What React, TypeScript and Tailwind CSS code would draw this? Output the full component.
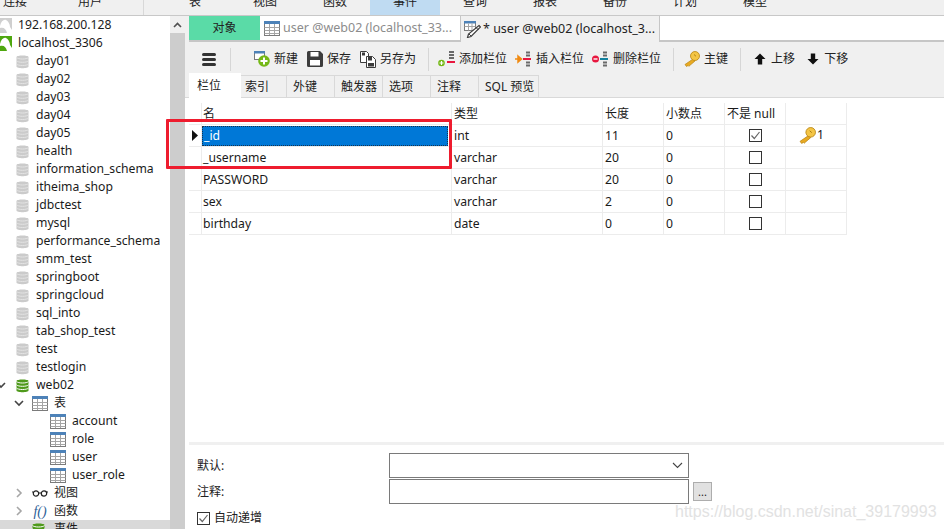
import React from "react";

const F = "font-['Noto_Sans','Noto_Sans_CJK_SC',sans-serif]";

function Db({ green = false }: { green?: boolean }) {
  const c = green ? "#4f9a1c" : "#cbcbcb";
  const d = green ? "#8fc765" : "#e4e4e4";
  return (
    <svg width="13" height="15" viewBox="0 0 13 15" className="shrink-0">
      <path d="M0.500 3C0.500 1 12.500 1 12.500 3V12.500C12.500 14.800 0.500 14.800 0.500 12.500z" fill={c} />
      <path d="M0.500 3.500C2 5.500 11 5.500 12.500 3.500M0.500 6.800C2 8.800 11 8.800 12.500 6.800M0.500 10C2 12 11 12 12.500 10" fill="none" stroke={green ? "#fff" : d} strokeWidth="1" />
    </svg>
  );
}

function Server({ green = false }: { green?: boolean }) {
  return (
    <svg width="12" height="15" viewBox="0 0 12 15" className="shrink-0">
      <rect width="12" height="15" fill={green ? "#4ea70f" : "#cfcfcf"} />
      <path d="M0 8C1 3 4 1 6 2c2 1 4 4 4 7l2 3v3H7C6 11 4 9 0 10z" fill="#fff" />
    </svg>
  );
}

function TableIcon() {
  return (
    <svg width="16" height="15" viewBox="0 0 16 15" className="shrink-0">
      <rect x="0.500" y="0.500" width="15" height="14" fill="#fff" stroke="#7b7b7b" />
      <rect x="0" y="0" width="16" height="3" fill="#4d82b8" />
      <path d="M0.500 6.500h15M0.500 9.500h15M0.500 12.500h15M5.500 3v11M10.500 3v11" stroke="#a5a5a5" fill="none" />
    </svg>
  );
}

function EditTableIcon() {
  return (
    <svg width="17" height="17" viewBox="0 0 17 17" className="shrink-0">
      <rect x="0.500" y="0.500" width="11" height="9" fill="#fff" stroke="#7b7b7b" />
      <rect x="0" y="0" width="12" height="2.500" fill="#4d82b8" />
      <path d="M0.500 5.500h11M4.500 2.500v7M8 2.500v7" stroke="#a5a5a5" fill="none" />
      <path d="M15 4.500l1.500 1.500L7 15.500 3.500 16.500 4.500 13z" fill="#fff" stroke="#3c3c3c" strokeWidth="1.200" />
      <path d="M12.500 7l2 2M5 13l2 2" stroke="#3c3c3c" />
    </svg>
  );
}

function Chevron({ open = false, dark = false }: { open?: boolean; dark?: boolean }) {
  return (
    <svg width="10" height="10" viewBox="0 0 10 10" className="shrink-0">
      <path
        d={open ? "M1 3l4 4 4-4" : "M3 1l4 4-4 4"}
        fill="none"
        stroke={dark ? "#444" : "#a6a6a6"}
        strokeWidth="1.600"
      />
    </svg>
  );
}

function Key({ size = 16 }: { size?: number }) {
  return (
    <svg width={size} height={size} viewBox="0 0 16 16" className="shrink-0">
      <path d="M9 8L1 13.500l1.500 2 1.500-1 .8.800L11 10z" fill="#e8aa22" stroke="#b98412" strokeWidth="0.700" />
      <circle cx="11" cy="5" r="4.500" fill="#f4c545" stroke="#b98412" strokeWidth="0.800" />
      <path d="M10 3.500l2 1.800" stroke="#a97a10" strokeWidth="0.900" />
    </svg>
  );
}

function Check({ on = false }: { on?: boolean }) {
  return (
    <span className="flex h-[13px] w-[13px] shrink-0 items-center justify-center border border-[#333333] bg-white">
      {on && (
        <svg width="11" height="11" viewBox="0 0 11 11">
          <path d="M1.500 5.500l2.800 3 5.200-6.500" fill="none" stroke="#666" strokeWidth="1.200" />
        </svg>
      )}
    </span>
  );
}

const NewIcon = () => (
  <svg width="16" height="16" viewBox="0 0 16 16" className="shrink-0">
    <rect x="0.500" y="0.500" width="10" height="8" fill="#fff" stroke="#7b7b7b" />
    <rect width="11" height="2.500" fill="#4d82b8" />
    <circle cx="10" cy="10" r="5.800" fill="#74b816" />
    <path d="M6.500 10h7M10 6.500v7" stroke="#fff" strokeWidth="2" />
  </svg>
);
const SaveIcon = () => (
  <svg width="16" height="16" viewBox="0 0 16 16" className="shrink-0">
    <path d="M0 1.500A1.500 1.500 0 0 1 1.500 0H13l3 3v11.500a1.500 1.500 0 0 1-1.500 1.500h-13A1.500 1.500 0 0 1 0 14.500z" fill="#3c3c3c" />
    <rect x="3.500" y="1" width="8" height="4.500" fill="#fff" />
    <rect x="3" y="9" width="10" height="5.500" fill="#fff" />
  </svg>
);
const SaveAsIcon = () => (
  <svg width="16" height="17" viewBox="0 0 16 17" className="shrink-0">
    <path d="M0.500 0.500h6l2 2v9h-8z" fill="#fff" stroke="#3c3c3c" />
    <rect x="2" y="1.500" width="3" height="3" fill="#3c3c3c" />
    <path d="M6.500 5.500h6l3 3v8h-9z" fill="#fff" stroke="#3c3c3c" />
    <rect x="8" y="6" width="4" height="3.500" fill="#3c3c3c" />
    <rect x="8" y="12" width="6" height="3.500" fill="#3c3c3c" />
  </svg>
);
function ColIcon({ kind }: { kind: "add" | "ins" | "del" }) {
  if (kind === "add") {
    return (
      <svg width="17" height="16" viewBox="0 0 17 16" className="shrink-0">
        <path d="M11 1h5M11 4h5M11 7h5" stroke="#6a6a6a" strokeWidth="1.800" />
        <path d="M9 11h8" stroke="#e8173f" strokeWidth="2" />
        <circle cx="3.500" cy="12" r="3.300" fill="#74b816" />
        <path d="M1.500 12h4M3.500 10v4" stroke="#fff" strokeWidth="1.200" />
      </svg>
    );
  }
  return (
    <svg width="16" height="16" viewBox="0 0 16 16" className="shrink-0">
      <path d="M11 1.500h4M11 4.500h4M11 11.500h4M11 14.500h4" stroke="#6a6a6a" strokeWidth="1.800" />
      <path d="M8 8h8" stroke={kind === "ins" ? "#e8173f" : "#13809d"} strokeWidth="2" />
      {kind === "ins" ? (
        <path d="M0 8h4M3 5l3.500 3-3.500 3z" fill="#f08a12" stroke="#f08a12" strokeWidth="1.500" />
      ) : (
        <>
          <circle cx="3.500" cy="8" r="3.500" fill="#e8173f" />
          <path d="M1.500 8h4" stroke="#fff" strokeWidth="1.400" />
        </>
      )}
    </svg>
  );
}
const Arrow = ({ up }: { up: boolean }) => (
  <svg width="12" height="12" viewBox="0 0 12 12" className="shrink-0">
    <path
      d={up ? "M6 0.500L11.500 6H8.200v5.500H3.800V6H0.500z" : "M6 11.500L0.500 6h3.300V0.500h4.400V6h3.300z"}
      fill="#111"
    />
  </svg>
);

const Sep = ({ className }: { className: string }) => <div className={`h-[23px] w-px shrink-0 bg-[#d6d6d6] ${className}`} />;

function Tool({ icon, label, className }: { icon: React.ReactNode; label: string; className?: string }) {
  return (
    <div className={`flex items-center ${className ?? ""}`}>
      {icon}
      <span className="whitespace-nowrap text-[12px] text-[#222222]">{label}</span>
    </div>
  );
}

const dbs = [
  "day01","day02","day03","day04","day05","health","information_schema","itheima_shop","jdbctest","mysql",
  "performance_schema","smm_test","springboot","springcloud","sql_into","tab_shop_test","test","testlogin",
];

function TreeRow({ children, className }: { children: React.ReactNode; className?: string }) {
  return <div className={`flex h-[18px] shrink-0 items-center whitespace-nowrap ${className ?? ""}`}>{children}</div>;
}

const cols = "grid grid-cols-[13px_250px_151px_61px_61px_61px_61px]";
const cell = "flex items-center border-r border-b border-[#ececec] px-[2px] text-[12.200px] text-[#1a1a1a]";

const rows = [
  { name: "_id", type: "int", len: "11", dec: "0", nn: true, pk: true },
  { name: "_username", type: "varchar", len: "20", dec: "0" },
  { name: "PASSWORD", type: "varchar", len: "20", dec: "0" },
  { name: "sex", type: "varchar", len: "2", dec: "0" },
  { name: "birthday", type: "date", len: "0", dec: "0" },
];

export default function App() {
  return (
    <div className={`relative flex h-[529px] w-[944px] flex-col overflow-hidden bg-white ${F}`}>
      {/* menu strip, clipped at the top */}
      <div className="flex h-[16px] shrink-0 overflow-hidden border-b border-[#c8c8c8] bg-[#f0f0f0] text-[12px] text-[#222222]">
        <div className="flex w-[144px] shrink-0 border-r border-[#d8d8d8] pl-[3px]">
          <span className="-mt-[7px] w-[75px]">连接</span>
          <span className="-mt-[7px]">用户</span>
        </div>
        <div className="flex pl-[16px]">
          {["表","视图","函数","事件","查询","报表","备份","计划","模型"].map((m) => (
            <div
              key={m}
              className={`flex h-[15px] w-[70px] justify-center ${m === "事件" ? "bg-[#bfdbf2]" : ""}`}
            >
              <span className="-mt-[7px]">{m}</span>
            </div>
          ))}
        </div>
      </div>

      <div className="flex min-h-0 flex-1">
        {/* sidebar */}
        <div className="flex w-[170px] shrink-0 flex-col overflow-hidden text-[12.200px] text-[#1a1a1a]">
          <TreeRow className="gap-[6px]"><Server /><span>192.168.200.128</span></TreeRow>
          <TreeRow className="gap-[6px]"><Server green /><span>localhost_3306</span></TreeRow>
          {dbs.map((d) => (
            <TreeRow key={d} className="gap-[7px] pl-[16px]"><Db /><span>{d}</span></TreeRow>
          ))}
          <TreeRow>
            <span className="-ml-[4px] mr-[10px] flex"><Chevron open dark /></span>
            <Db green />
            <span className="ml-[7px]">web02</span>
          </TreeRow>
          <TreeRow className="pl-[14px]">
            <Chevron open dark />
            <span className="ml-[8px]"><TableIcon /></span>
            <span className="ml-[6px] text-[12px]">表</span>
          </TreeRow>
          {["account","role","user","user_role"].map((t) => (
            <TreeRow key={t} className="gap-[6px] pl-[50px]"><TableIcon /><span>{t}</span></TreeRow>
          ))}
          <TreeRow className="pl-[14px]">
            <Chevron />
            <span className="ml-[8px]">
              <svg width="16" height="8" viewBox="0 0 16 8" className="block">
                <circle cx="4" cy="4.500" r="2.700" fill="none" stroke="#222" strokeWidth="1.200" />
                <circle cx="12" cy="4.500" r="2.700" fill="none" stroke="#222" strokeWidth="1.200" />
                <path d="M6.500 4h3M0 3l1.500 0M14.500 3l1.500 0" stroke="#222" />
              </svg>
            </span>
            <span className="ml-[6px] text-[12px]">视图</span>
          </TreeRow>
          <TreeRow className="pl-[14px]">
            <Chevron />
            <span className="ml-[8px] w-[16px] text-center font-['Liberation_Serif',serif] text-[14px] italic text-[#2c5e96]">f()</span>
            <span className="ml-[6px] text-[12px]">函数</span>
          </TreeRow>
          <TreeRow className="bg-[#d9d9d9] pl-[32px] text-[12px]">
            <Db green />
            <span className="ml-[9px]">事件</span>
          </TreeRow>
        </div>

        {/* scroll bar */}
        <div className="flex w-[15px] shrink-0 flex-col bg-[#cdcdcd]">
          <div className="flex h-[17px] items-center justify-center bg-[#f0f0f0]">
            <svg width="9" height="6" viewBox="0 0 9 6"><path d="M1 5l3.500-3.500L8 5" fill="none" stroke="#505050" strokeWidth="1.600" /></svg>
          </div>
        </div>

        {/* main */}
        <div className="flex min-w-0 flex-1 flex-col">
          {/* document tabs */}
          <div className="h-[26px] shrink-0 bg-[#f0f0f0] pl-[4px]">
            <div className="flex h-[26px] border-b-2 border-[#c6c6c6] bg-white text-[12.500px]">
              <div className="flex w-[71px] items-center justify-center bg-[#5adba7] text-[12px] text-[#222222]">对象</div>
              <div className="flex w-[200px] items-center gap-[3px] pl-[4px] text-[#8c8c8c]">
                <TableIcon />
                <span className="whitespace-nowrap">user @web02 (localhost_33...</span>
              </div>
              <div className="-mb-[2px] flex w-[200px] items-center gap-[2px] border-x border-[#c6c6c6] bg-[#f0f0f0] pl-[3px] text-[#222222]">
                <EditTableIcon />
                <span className="whitespace-nowrap">* user @web02 (localhost_3...</span>
              </div>
            </div>
          </div>

          {/* toolbar */}
          <div className="flex h-[31px] shrink-0 items-center bg-[#f0f0f0] pl-[17px] pt-[3px]">
            <div className="flex w-[14px] flex-col gap-[2px]">
              <span className="block h-[3px] rounded-sm bg-[#333333]" />
              <span className="block h-[3px] rounded-sm bg-[#333333]" />
              <span className="block h-[3px] rounded-sm bg-[#333333]" />
            </div>
            <Sep className="ml-[14px]" />
            <Tool className="ml-[23px] gap-[4px]" icon={<NewIcon />} label="新建" />
            <Tool className="ml-[9px] gap-[4px]" icon={<SaveIcon />} label="保存" />
            <Tool className="ml-[9px] gap-[4px]" icon={<SaveAsIcon />} label="另存为" />
            <Sep className="ml-[12px]" />
            <Tool className="ml-[9px] gap-[4px]" icon={<ColIcon kind="add" />} label="添加栏位" />
            <Tool className="ml-[8px] gap-[5px]" icon={<ColIcon kind="ins" />} label="插入栏位" />
            <Tool className="ml-[8px] gap-[5px]" icon={<ColIcon kind="del" />} label="删除栏位" />
            <Sep className="ml-[12px]" />
            <Tool className="ml-[10px] gap-[4px]" icon={<Key />} label="主键" />
            <Sep className="ml-[12px]" />
            <Tool className="ml-[13px] gap-[5px]" icon={<Arrow up />} label="上移" />
            <Tool className="ml-[12px] gap-[5px]" icon={<Arrow up={false} />} label="下移" />
          </div>

          {/* sub tabs */}
          <div className="flex h-[25px] shrink-0 items-end border-b border-[#d9d9d9] bg-[#f0f0f0] pl-[4px] text-[12px] text-[#222222]">
            <div className="-mb-px flex h-[25px] w-[52px] items-center bg-white pl-[8px]">栏位</div>
            {[
              ["索引", "w-[46px] pl-[4px]"],
              ["外键", "w-[48px] pl-[6px]"],
              ["触发器", "w-[48px] pl-[6px]"],
              ["选项", "w-[48px] pl-[6px]"],
              ["注释", "w-[48px] pl-[6px]"],
              ["SQL 预览", "w-[60px] pl-[6px]"],
            ].map(([t, w]) => (
              <div key={t} className={`flex h-[22px] items-center whitespace-nowrap border-r border-t border-[#d9d9d9] ${w}`}>
                {t}
              </div>
            ))}
          </div>

          {/* grid */}
          <div className="min-h-0 flex-1 pl-[4px] pt-[5px]">
            <div className={`${cols} w-[658px]`}>
              <div className="h-[22px] border-r border-b border-[#ececec]" />
              {["名","类型","长度","小数点","不是 null",""].map((h, i) => (
                <div key={i} className={`${cell} h-[22px] text-[12px] ${i === 0 ? "pl-[1px]" : ""}`}>{h}</div>
              ))}
              {rows.map((r, i) => (
                <React.Fragment key={r.name}>
                  <div className="flex h-[22px] items-center justify-center border-r border-b border-[#ececec]">
                    {i === 0 && (
                      <svg width="6" height="11" viewBox="0 0 6 11"><path d="M0 0l6 5.500L0 11z" fill="#111" /></svg>
                    )}
                  </div>
                  <div className={`${cell} h-[22px] pl-[1px] ${i === 0 ? "pr-[2px]" : "pt-[2px]"}`}>
                    {i === 0 ? (
                      <span className="-ml-px flex h-[20px] w-full items-center border border-dotted border-[#16334f] bg-[#0078d7] pl-[1px] pt-[1px] text-white">{r.name}</span>
                    ) : (
                      <span>{r.name}</span>
                    )}
                  </div>
                  <div className={`${cell} h-[22px] pt-[2px]`}>{r.type}</div>
                  <div className={`${cell} h-[22px] pt-[2px]`}>{r.len}</div>
                  <div className={`${cell} h-[22px] pt-[2px]`}>{r.dec}</div>
                  <div className={`${cell} h-[22px] justify-center`}><Check on={!!r.nn} /></div>
                  <div className={`${cell} h-[22px] gap-[1px] pl-[13px]`}>
                    {r.pk && (<><Key size={17} /><span>1</span></>)}
                  </div>
                </React.Fragment>
              ))}
            </div>
          </div>

          {/* bottom form */}
          <div className="h-[87px] shrink-0 pl-[4px] text-[12px] text-[#222222]">
            <div className="flex h-full flex-col border-t-[3px] border-[#f0f0f0] pl-[8px] pt-[8px]">
              <div className="flex h-[25px] items-center">
                <span className="w-[192px] pt-[1px]">默认:</span>
                <div className="flex h-[25px] w-[300px] items-center justify-end border border-[#7a7a7a] pr-[5px]">
                  <svg width="11" height="7" viewBox="0 0 11 7"><path d="M1 1l4.500 4.500L10 1" fill="none" stroke="#444" strokeWidth="1.100" /></svg>
                </div>
              </div>
              <div className="mt-px flex h-[25px] items-center">
                <span className="w-[192px]">注释:</span>
                <div className="h-[25px] w-[300px] border border-[#7a7a7a]" />
                <div className="ml-[4px] flex h-[19px] w-[19px] items-center justify-center border border-[#adadad] bg-[#e1e1e1] text-[11px] leading-none">...</div>
              </div>
              <div className="mt-[5px] flex items-center gap-[4px]">
                <Check on />
                <span>自动递增</span>
              </div>
            </div>
          </div>
        </div>
      </div>

      {/* annotation drawn over the grid */}
      <div className="absolute left-[166px] top-[119px] h-[50px] w-[286px] rounded-[1px] border-[3px] border-[#ee1c2e]" />
      {/* watermark */}
      <span className="absolute left-[675px] top-[500px] font-['Liberation_Sans',sans-serif] text-[16px] text-[#e2e2e2]">
        https://blog.csdn.net/sinat_39179993
      </span>
    </div>
  );
}
